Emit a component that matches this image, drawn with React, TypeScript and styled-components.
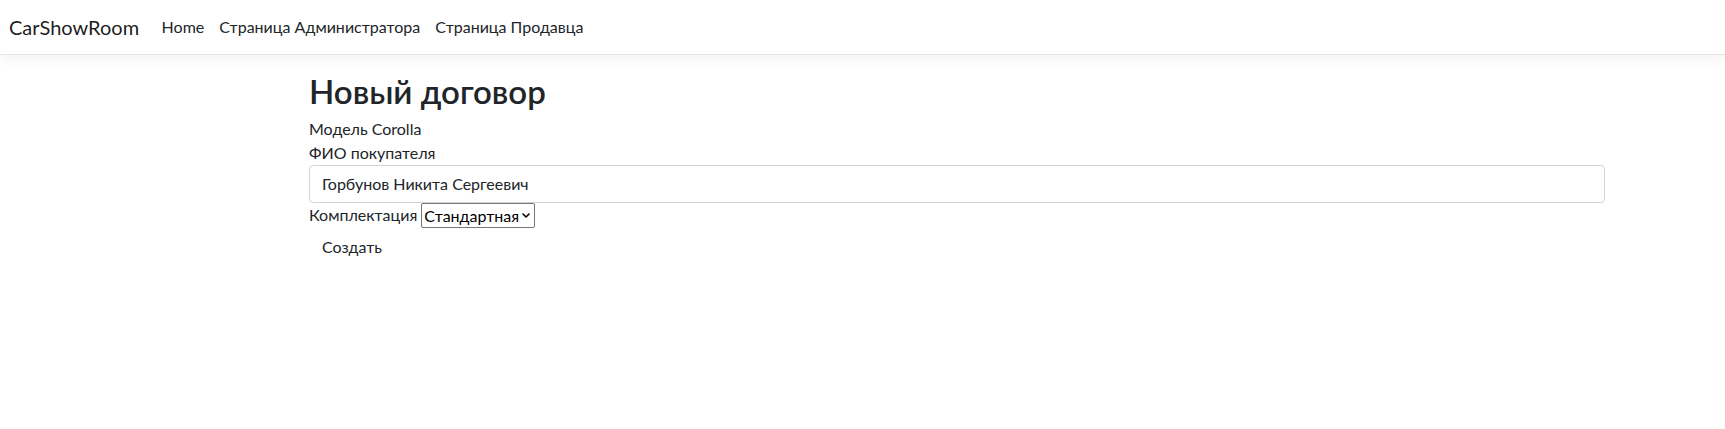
import React from "react";
import styled, { createGlobalStyle } from "styled-components";

const GlobalStyle = createGlobalStyle`
  *, *::before, *::after { box-sizing: border-box; }
  html, body { margin: 0; padding: 0; background: #fff; }
  body {
    font-family: "Lato", "Liberation Sans", sans-serif;
    font-size: 16px;
    line-height: 1.5;
    color: #212529;
  }
`;

const Navbar = styled.header`
  display: flex;
  align-items: flex-start;
  height: 55px;
  padding: 15px 0 0 9px;
  background: #fff;
  border-bottom: 1px solid #e5e5e5;
  box-shadow: 0 4px 12px rgba(0, 0, 0, 0.05);
`;

const Brand = styled.a`
  font-size: 20px;
  line-height: 24px;
  color: rgba(0, 0, 0, 0.9);
  text-decoration: none;
  margin-right: 15px;
  white-space: nowrap;
`;

const NavList = styled.nav`
  display: flex;
  align-items: flex-start;
`;

const NavLink = styled.a`
  font-size: 16px;
  line-height: 24px;
  padding: 0 7.5px;
  color: #212529;
  text-decoration: none;
  white-space: nowrap;
`;

const Container = styled.main`
  width: 1296px;
  margin: 17px 0 0 309px;
`;

const Title = styled.h2`
  margin: 0 0 5px;
  font-size: 33px;
  font-weight: 600;
  line-height: 1.2;
  color: #212529;
`;

const Line = styled.div`
  font-size: 16px;
  line-height: 24px;
`;

const TextInput = styled.input`
  display: block;
  width: 100%;
  height: 38px;
  padding: 6px 12px;
  font-family: inherit;
  font-size: 16px;
  line-height: 24px;
  color: #212529;
  background: #fff;
  border: 1px solid #ced4da;
  border-radius: 4px;
  outline: none;
`;

const SelectRow = styled.div`
  display: flex;
  align-items: center;
  gap: 4px;
  height: 25px;
  font-size: 16px;
  line-height: 24px;
`;

const SelectWrap = styled.span`
  position: relative;
  display: inline-flex;
`;

const Select = styled.select`
  appearance: none;
  -webkit-appearance: none;
  height: 25px;
  padding: 0 15px 0 2px;
  font-family: inherit;
  font-size: 16px;
  line-height: 23px;
  color: #000;
  background: #fff;
  border: 1px solid #767676;
  border-radius: 2px;
  outline: none;
`;

const Chevron = styled.svg`
  position: absolute;
  right: 5px;
  top: 10px;
  width: 8px;
  height: 5px;
  pointer-events: none;
`;

const Button = styled.button`
  display: inline-block;
  padding: 6px 12px;
  font-family: inherit;
  font-size: 16px;
  line-height: 24px;
  color: #212529;
  background: transparent;
  border: 1px solid transparent;
  border-radius: 4px;
  cursor: pointer;
`;

export default function App() {
  return (
    <>
      <GlobalStyle />
      <Navbar>
        <Brand href="#">CarShowRoom</Brand>
        <NavList>
          <NavLink href="#">Home</NavLink>
          <NavLink href="#">Страница Администратора</NavLink>
          <NavLink href="#">Страница Продавца</NavLink>
        </NavList>
      </Navbar>
      <Container>
        <Title>Новый договор</Title>
        <Line>Модель Corolla</Line>
        <Line>ФИО покупателя</Line>
        <TextInput defaultValue="Горбунов Никита Сергеевич" />
        <SelectRow>
          <span>Комплектация</span>
          <SelectWrap>
            <Select defaultValue="std">
              <option value="std">Стандартная</option>
            </Select>
            <Chevron viewBox="0 0 8 5">
              <path d="M1 1 L4 4 L7 1" fill="none" stroke="#000" strokeWidth="1.6" strokeLinecap="round" strokeLinejoin="round" />
            </Chevron>
          </SelectWrap>
        </SelectRow>
        <Button type="button">Создать</Button>
      </Container>
    </>
  );
}
